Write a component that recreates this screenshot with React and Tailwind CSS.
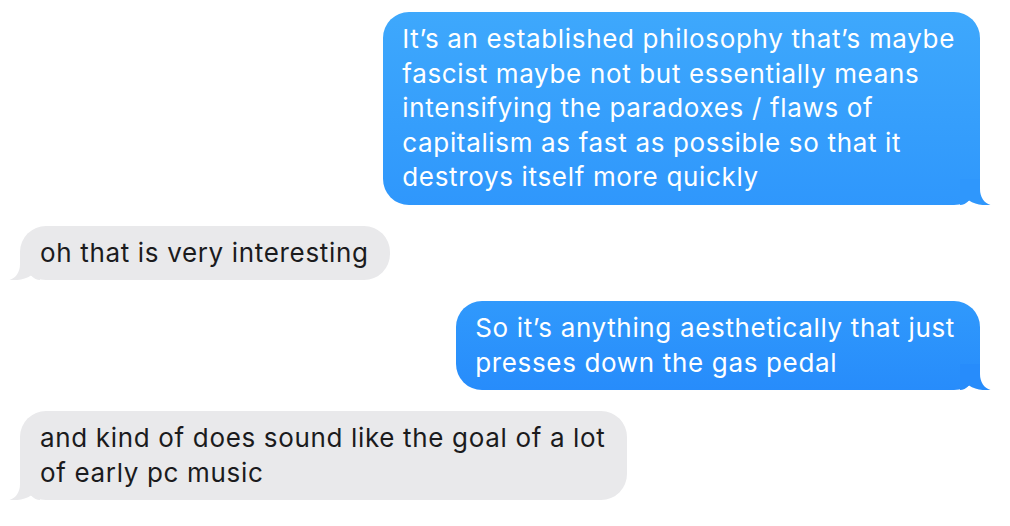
import React from 'react';

const messages = [
  {
    from: 'me',
    lines: [
      'It’s an established philosophy that’s maybe',
      'fascist maybe not but essentially means',
      'intensifying the paradoxes / flaws of',
      'capitalism as fast as possible so that it',
      'destroys itself more quickly',
    ],
    bg: 'bg-gradient-to-b from-[#3ea8fc] to-[#2f97fc]',
    tail: '#2f97fc',
  },
  {
    from: 'them',
    lines: ['oh that is very interesting'],
  },
  {
    from: 'me',
    lines: ['So it’s anything aesthetically that just', 'presses down the gas pedal'],
    bg: 'bg-gradient-to-b from-[#3099fc] to-[#278cfb]',
    tail: '#278cfb',
  },
  {
    from: 'them',
    lines: ['and kind of does sound like the goal of a lot', 'of early pc music'],
  },
];

const Tail = ({ side, color }) => (
  <svg
    width="32"
    height="26"
    viewBox="0 0 32 26"
    className={side === 'right' ? 'absolute -right-[12px] bottom-0' : 'absolute -left-[12px] bottom-0 -scale-x-100'}
  >
    <path
      d="M0 0 H20 V10 C20 18 24 24 30.5 26 C25 26.6 15 26 9 21.5 C6 24.5 3 26 0 26 Z"
      fill={color}
    />
  </svg>
);

const Bubble = ({ msg }) => {
  const mine = msg.from === 'me';
  return (
    <div className={`flex ${mine ? 'justify-end' : 'justify-start'}`}>
      <div
        className={`relative rounded-[26px] py-[10px] ${
          mine ? `${msg.bg} text-white pl-[19px] pr-[25px]` : 'bg-[#e9e9eb] text-[#1b1b1d] pl-[20px] pr-[21px]'
        }`}
      >
        {msg.lines.map((line) => (
          <div key={line} className="whitespace-nowrap text-[26px] leading-[34.5px] tracking-[0.66px]">
            {line}
          </div>
        ))}
        <Tail side={mine ? 'right' : 'left'} color={mine ? msg.tail : '#e9e9eb'} />
      </div>
    </div>
  );
};

export default function App() {
  return (
    <div
      className="w-[1010px] h-[526px] bg-white pt-[12px] pl-[20px] pr-[30px] flex flex-col gap-[21px] overflow-hidden"
      style={{ fontFamily: 'Inter, "Noto Sans", sans-serif' }}
    >
      {messages.map((m, i) => (
        <Bubble key={i} msg={m} />
      ))}
    </div>
  );
}
